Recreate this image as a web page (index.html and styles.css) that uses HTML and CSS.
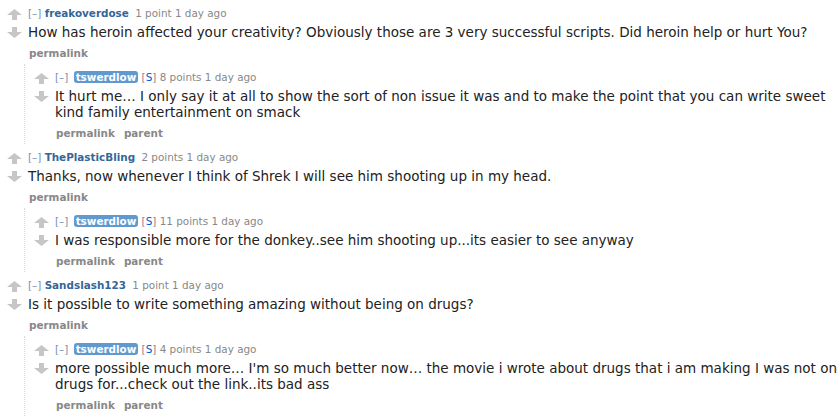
FILE: index.html
```html
<!DOCTYPE html>
<html>
<head>
<meta charset="utf-8">
<link rel="stylesheet" href="styles.css">
</head>
<body>
<div class="thread">

  <div class="comment">
    <div class="midcol">
      <svg class="arrow up" viewBox="0 0 15 11" width="15" height="11"><polygon points="7.5,0 15,6 10,6 10,11 5,11 5,6 0,6"/></svg>
      <svg class="arrow down" viewBox="0 0 15 11" width="15" height="11"><polygon points="5,0 10,0 10,5 15,5 7.5,11 0,5 5,5"/></svg>
    </div>
    <div class="entry">
      <p class="tagline"><span class="expand">[–]</span> <a class="author">freakoverdose</a> <span class="score">1 point</span> <span class="time">1 day ago</span></p>
      <div class="md">How has heroin affected your creativity? Obviously those are 3 very successful scripts. Did heroin help or hurt You?</div>
      <ul class="buttons"><li>permalink</li></ul>
    </div>
  </div>
  <div class="child">
    <div class="comment">
      <div class="midcol">
        <svg class="arrow up" viewBox="0 0 15 11" width="15" height="11"><polygon points="7.5,0 15,6 10,6 10,11 5,11 5,6 0,6"/></svg>
        <svg class="arrow down" viewBox="0 0 15 11" width="15" height="11"><polygon points="5,0 10,0 10,5 15,5 7.5,11 0,5 5,5"/></svg>
      </div>
      <div class="entry">
        <p class="tagline"><span class="expand">[–]</span> <a class="author submitter">tswerdlow</a> <span class="flag">[<b>S</b>]</span> <span class="score">8 points</span> <span class="time">1 day ago</span></p>
        <div class="md">It hurt me… I only say it at all to show the sort of non issue it was and to make the point that you can write sweet kind family entertainment on smack</div>
        <ul class="buttons"><li>permalink</li><li>parent</li></ul>
      </div>
    </div>
  </div>

  <div class="comment">
    <div class="midcol">
      <svg class="arrow up" viewBox="0 0 15 11" width="15" height="11"><polygon points="7.5,0 15,6 10,6 10,11 5,11 5,6 0,6"/></svg>
      <svg class="arrow down" viewBox="0 0 15 11" width="15" height="11"><polygon points="5,0 10,0 10,5 15,5 7.5,11 0,5 5,5"/></svg>
    </div>
    <div class="entry">
      <p class="tagline"><span class="expand">[–]</span> <a class="author">ThePlasticBling</a> <span class="score">2 points</span> <span class="time">1 day ago</span></p>
      <div class="md">Thanks, now whenever I think of Shrek I will see him shooting up in my head.</div>
      <ul class="buttons"><li>permalink</li></ul>
    </div>
  </div>
  <div class="child">
    <div class="comment">
      <div class="midcol">
        <svg class="arrow up" viewBox="0 0 15 11" width="15" height="11"><polygon points="7.5,0 15,6 10,6 10,11 5,11 5,6 0,6"/></svg>
        <svg class="arrow down" viewBox="0 0 15 11" width="15" height="11"><polygon points="5,0 10,0 10,5 15,5 7.5,11 0,5 5,5"/></svg>
      </div>
      <div class="entry">
        <p class="tagline"><span class="expand">[–]</span> <a class="author submitter">tswerdlow</a> <span class="flag">[<b>S</b>]</span> <span class="score">11 points</span> <span class="time">1 day ago</span></p>
        <div class="md">I was responsible more for the donkey..see him shooting up...its easier to see anyway</div>
        <ul class="buttons"><li>permalink</li><li>parent</li></ul>
      </div>
    </div>
  </div>

  <div class="comment">
    <div class="midcol">
      <svg class="arrow up" viewBox="0 0 15 11" width="15" height="11"><polygon points="7.5,0 15,6 10,6 10,11 5,11 5,6 0,6"/></svg>
      <svg class="arrow down" viewBox="0 0 15 11" width="15" height="11"><polygon points="5,0 10,0 10,5 15,5 7.5,11 0,5 5,5"/></svg>
    </div>
    <div class="entry">
      <p class="tagline"><span class="expand">[–]</span> <a class="author">Sandslash123</a> <span class="score">1 point</span> <span class="time">1 day ago</span></p>
      <div class="md">Is it possible to write something amazing without being on drugs?</div>
      <ul class="buttons"><li>permalink</li></ul>
    </div>
  </div>
  <div class="child">
    <div class="comment">
      <div class="midcol">
        <svg class="arrow up" viewBox="0 0 15 11" width="15" height="11"><polygon points="7.5,0 15,6 10,6 10,11 5,11 5,6 0,6"/></svg>
        <svg class="arrow down" viewBox="0 0 15 11" width="15" height="11"><polygon points="5,0 10,0 10,5 15,5 7.5,11 0,5 5,5"/></svg>
      </div>
      <div class="entry">
        <p class="tagline"><span class="expand">[–]</span> <a class="author submitter">tswerdlow</a> <span class="flag">[<b>S</b>]</span> <span class="score">4 points</span> <span class="time">1 day ago</span></p>
        <div class="md">more possible much more… I'm so much better now… the movie i wrote about drugs that i am making I was not on drugs for...check out the link..its bad ass</div>
        <ul class="buttons"><li>permalink</li><li>parent</li></ul>
      </div>
    </div>
  </div>

</div>
</body>
</html>
```

FILE: styles.css
```css
html, body {
  margin: 0;
  padding: 0;
  background: #ffffff;
}
body {
  font-family: "DejaVu Sans", Verdana, sans-serif;
  color: #222222;
  overflow: hidden;
}
.thread {
  padding: 0 0 0 7px;
}
.comment {
  display: flex;
  align-items: flex-start;
  padding-top: 6px;
  padding-bottom: 4px;
}
.midcol {
  width: 15px;
  flex: none;
  display: flex;
  flex-direction: column;
  padding-top: 3px;
  gap: 7px;
}
.arrow {
  display: block;
  fill: #c6c6c6;
}
.entry {
  flex: 1;
  margin-left: 6px;
}
.tagline {
  margin: 0;
  font-size: 10.4px;
  line-height: 14px;
  color: #888888;
}
.expand {
  color: #7791ad;
}
.author {
  color: #336699;
  font-weight: bold;
  margin-right: 3px;
}
.submitter {
  background: #5f99cf;
  color: #ffffff;
  border-radius: 3px;
  padding: 0 2px;
  margin-left: 2px;
  margin-right: 0;
}
.flag {
  color: #888888;
}
.flag b {
  font-weight: normal;
  color: #0055df;
}
.md {
  margin-top: 4px;
  font-size: 13.5px;
  line-height: 16px;
  color: #222222;
}
.buttons {
  list-style: none;
  margin: 6px 0 0 1px;
  padding: 0;
  display: flex;
  gap: 9px;
  font-size: 10.4px;
  line-height: 14px;
  font-weight: bold;
  color: #888888;
}
.child {
  margin-left: 17px;
  border-left: 1px dotted #d6d6ee;
  padding-left: 9px;
}
```
